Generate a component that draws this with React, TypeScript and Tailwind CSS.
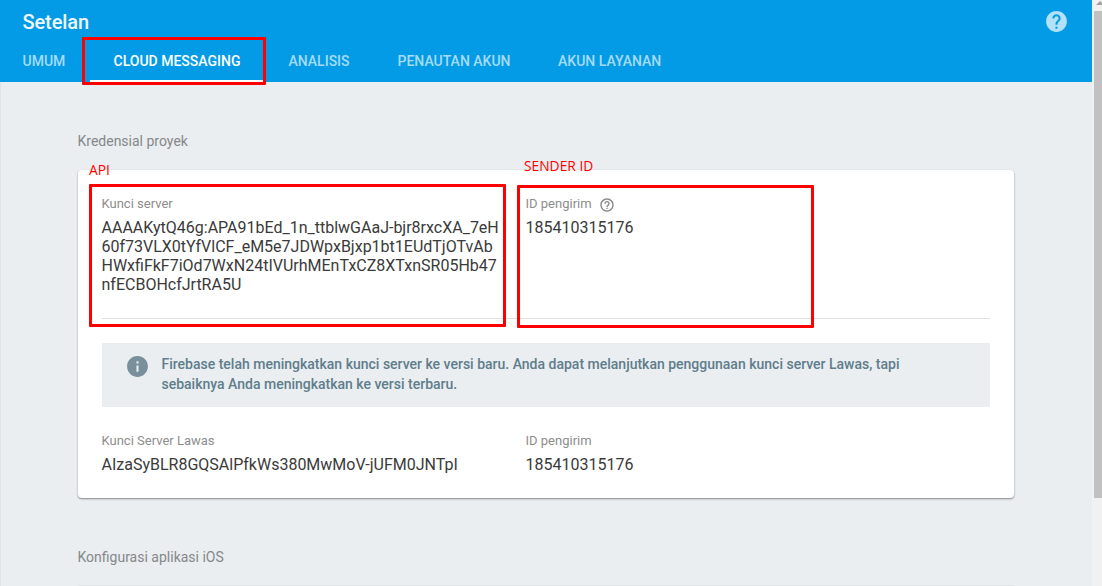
import type { ReactNode } from 'react';

const HELP_PATH =
  'M12 2C6.48 2 2 6.48 2 12s4.48 10 10 10 10-4.48 10-10S17.52 2 12 2zm1 17h-2v-2h2v2zm2.07-7.75l-.9.92C13.45 12.9 13 13.5 13 15h-2v-.5c0-1.1.45-2.1 1.17-2.83l1.24-1.26c.37-.36.59-.86.59-1.41 0-1.1-.9-2-2-2s-2 .9-2 2H8c0-2.21 1.79-4 4-4s4 1.79 4 4c0 .88-.36 1.68-.93 2.25z';
const HELP_OUTLINE_PATH =
  'M11 18h2v-2h-2v2zm1-16C6.48 2 2 6.48 2 12s4.48 10 10 10 10-4.48 10-10S17.52 2 12 2zm0 18c-4.41 0-8-3.59-8-8s3.59-8 8-8 8 3.59 8 8-3.59 8-8 8zm0-14c-2.21 0-4 1.79-4 4h2c0-1.1.9-2 2-2s2 .9 2 2c0 2-3 1.75-3 5h2c0-2.25 3-2.5 3-5 0-2.21-1.79-4-4-4z';
const INFO_PATH =
  'M12 2C6.48 2 2 6.48 2 12s4.48 10 10 10 10-4.48 10-10S17.52 2 12 2zm1 15h-2v-6h2v6zm0-8h-2V7h2v2z';

function Icon({ d, className }: { d: string; className: string }) {
  return (
    <svg viewBox="0 0 24 24" fill="currentColor" className={className} aria-hidden="true">
      <path d={d} />
    </svg>
  );
}

function Field({ label, icon, children }: { label: string; icon?: ReactNode; children: ReactNode }) {
  return (
    <div className="-ml-[0.5px]">
      <div className="flex h-5 items-center text-[13px] leading-5 text-[#8d8d8d]">
        <span>{label}</span>
        {icon}
      </div>
      <div className="mt-1 text-base leading-[19px] whitespace-nowrap text-[#3a3a3a]">{children}</div>
    </div>
  );
}

const TAB = 'flex h-[42px] items-center whitespace-nowrap text-[#a5dbf8]';

export default function App() {
  return (
    <div className="relative flex h-[586px] w-[1102px] overflow-hidden bg-[#eaeef1] font-['Roboto',sans-serif]">
      <div className="flex w-[1092px] flex-col">
        <header className="h-[82px] bg-[#039be5]">
          <div className="flex h-10 items-center justify-between pt-1 pr-[23.5px] pl-[22.5px]">
            <h1 className="text-xl font-medium tracking-[-0.1px] text-[#eef8fd]">Setelan</h1>
            <Icon d={HELP_PATH} className="-mt-px h-[25px] w-[25px] text-[#b3e1f7]" />
          </div>
          <nav className="flex text-sm font-medium">
            <div className={`${TAB} w-[67px] pl-[22.5px]`}>UMUM</div>
            <div className="ml-[23px] flex h-[42px] w-[174px] items-center border-b-2 border-white pl-[23.5px] pt-[2px] whitespace-nowrap text-white">
              CLOUD MESSAGING
            </div>
            <div className={`${TAB} w-[109px] pl-[24.5px]`}>ANALISIS</div>
            <div className={`${TAB} w-[161px] pl-[24.5px]`}>PENAUTAN AKUN</div>
            <div className={`${TAB} pl-[24px]`}>AKUN LAYANAN</div>
          </nav>
        </header>

        <main className="flex flex-col border-l border-[#e0e4e7] pl-[77px]">
          <h2 className="mt-[49px] -ml-[0.5px] text-sm leading-5 text-[#868889]">Kredensial proyek</h2>
          <section className="mt-[19px] h-[328px] w-[936px] rounded-sm bg-white px-6 pt-6 shadow-[0_1px_2px_rgba(0,0,0,0.45)]">
            <div className="grid h-[125px] grid-cols-[424px_1fr] border-b border-[#e0e0e0]">
              <Field label="Kunci server">
                AAAAKytQ46g:APA91bEd_1n_ttblwGAaJ-bjr8rxcXA_7eH
                <br />
                60f73VLX0tYfVlCF_eM5e7JDWpxBjxp1bt1EUdTjOTvAb
                <br />
                HWxfiFkF7iOd7WxN24tIVUrhMEnTxCZ8XTxnSR05Hb47
                <br />
                nfECBOHcfJrtRA5U
              </Field>
              <Field
                label="ID pengirim"
                icon={<Icon d={HELP_OUTLINE_PATH} className="mt-[2px] ml-[7px] h-4 w-4 text-[#858585]" />}
              >
                185410315176
              </Field>
            </div>
            <div className="mt-6 flex h-16 bg-[#eaeef1] pt-[11px] pl-[23px]">
              <Icon d={INFO_PATH} className="-mt-[0.5px] h-[25px] w-[25px] text-[#78909c]" />
              <p className="ml-[11.5px] text-sm leading-5 font-medium whitespace-nowrap text-[#607d8b]">
                Firebase telah meningkatkan kunci server ke versi baru. Anda dapat melanjutkan penggunaan kunci server
                Lawas, tapi
                <br />
                sebaiknya Anda meningkatkan ke versi terbaru.
              </p>
            </div>
            <div className="mt-6 grid grid-cols-[424px_1fr]">
              <Field label="Kunci Server Lawas">AIzaSyBLR8GQSAlPfkWs380MwMoV-jUFM0JNTpI</Field>
              <Field label="ID pengirim">185410315176</Field>
            </div>
          </section>
          <h2 className="mt-[49px] -ml-[0.5px] text-sm leading-5 text-[#868889]">Konfigurasi aplikasi iOS</h2>
          <div className="mt-[18px] h-px w-[936px] bg-[#e0e4e6]" />
        </main>
      </div>

      <div className="flex w-[10px] flex-col bg-[#f1f1f1] pl-[2px]">
        <div className="flex h-[11px] items-start overflow-hidden">
          <svg viewBox="0 0 8 11" className="h-[11px] w-2" aria-hidden="true">
            <path d="M2 5L6 1L10 5Z" fill="#a0a0a0" />
          </svg>
        </div>
        <div className="h-[487px] bg-[#c1c1c1]" />
      </div>

      <div className="absolute top-[37px] left-[82px] h-12 w-[184px] rounded-[1px] border-3 border-[#ff0000]" />
      <div className="absolute top-[184px] left-[89px] h-[143px] w-[417px] rounded-[1px] border-3 border-[#ff0000]" />
      <div className="absolute top-[185px] left-[517px] h-[143px] w-[297px] rounded-[1px] border-3 border-[#ff0000]" />
      <span className="absolute top-[160px] left-[89px] font-['Open_Sans',sans-serif] text-[13.8px] leading-5 text-[#ff0000]">
        API
      </span>
      <span className="absolute top-[156px] left-[524px] font-['Open_Sans',sans-serif] text-[13.8px] leading-5 whitespace-nowrap text-[#ff0000]">
        SENDER ID
      </span>
    </div>
  );
}
